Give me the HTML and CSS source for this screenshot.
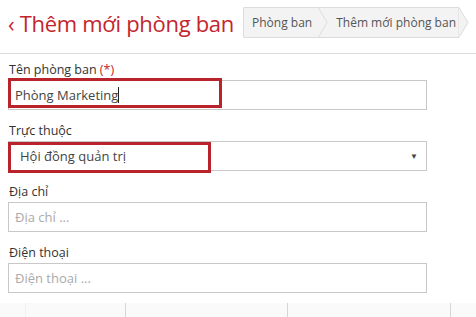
FILE: index.html
```html
<!DOCTYPE html>
<html>
<head lang="vi">
    <meta charset="UTF-8">
    <title>Thêm mới phòng ban</title>
    <link rel="stylesheet" href="styles.css">
</head>
<body>
<div class="header">
    <div class="title"><span class="back">&lsaquo;</span> Thêm mới phòng ban</div>
    <div class="crumbs">
        <span class="crumb">Phòng ban</span>
        <svg class="sep" width="16" height="31" viewBox="0 0 16 31"><rect x="0" y="0" width="16" height="31" fill="#f3f3f3"/><line x1="0" y1="0.5" x2="16" y2="0.5" stroke="#dcdcdc"/><line x1="0" y1="30.5" x2="16" y2="30.5" stroke="#dcdcdc"/><polyline points="3,0 12,15.5 3,31" fill="none" stroke="#dcdcdc"/></svg>
        <span class="crumb last">Thêm mới phòng ban</span>
        <svg class="sep" width="12" height="31" viewBox="0 0 12 31"><polygon points="0,0.5 1,0.5 10,15.5 1,30.5 0,30.5" fill="#f3f3f3" stroke="#dcdcdc"/></svg>
    </div>
</div>

<div class="form">
    <div class="field">
        <label>Tên phòng ban <span class="req">(*)</span></label>
        <div class="box">
            <div class="inp txt">Phòng Marketing<span class="caret"></span></div>
            <div class="mark mark1"></div>
        </div>
    </div>
    <div class="field">
        <label>Trực thuộc</label>
        <div class="box">
            <div class="inp sel">Hội đồng quản trị<span class="arrow">&#9660;</span></div>
            <div class="mark mark2"></div>
        </div>
    </div>
    <div class="field">
        <label>Địa chỉ</label>
        <div class="box"><input class="inp" type="text" placeholder="Địa chỉ ..."></div>
    </div>
    <div class="field">
        <label>Điện thoại</label>
        <div class="box"><input class="inp" type="text" placeholder="Điện thoại ..."></div>
    </div>
</div>

<div class="bar">
    <div class="cell c1"></div>
    <div class="cell c2"></div>
    <div class="cell c3"></div>
    <div class="cell c4"></div>
</div>
</body>
</html>
```

FILE: styles.css
```css
*{
    padding:0;
    margin:0;
    box-sizing: border-box;
}
body{
    font-family: "Open Sans", "Noto Sans", sans-serif;
    background: #fff;
    width: 476px;
    height: 317px;
    overflow: hidden;
}
.header{
    display: flex;
    justify-content: space-between;
    align-items: flex-start;
    height: 54px;
    padding: 7px 6px 0 8px;
    border-bottom: 1px solid #dcdcdc;
}
.title{
    color: #c4252c;
    font-size: 22px;
    line-height: 32px;
    letter-spacing: -0.3px;
}
.back{
    font-size: 22px;
}
.crumbs{
    display: flex;
    height: 31px;
}
.crumb{
    background: #f3f3f3;
    border-top: 1px solid #dcdcdc;
    border-bottom: 1px solid #dcdcdc;
    color: #555;
    font-size: 12px;
    line-height: 29px;
    padding: 0;
}
.crumb:first-child{
    border-left: 1px solid #dcdcdc;
    border-radius: 2px 0 0 2px;
    padding-left: 8px;
    padding-right: 3px;
}
.crumb.last{
    padding-left: 5px;
    padding-right: 2px;
}
.sep{
    display: block;
}
.form{
    padding: 5px 49px 0 8px;
}
.field{
    margin-bottom: 10px;
}
.field label{
    display: block;
    font-size: 12.5px;
    line-height: 21px;
    color: #333;
    padding-left: 1px;
}
.req{
    color: #c4252c;
}
.box{
    position: relative;
}
.inp{
    display: block;
    width: 100%;
    height: 30px;
    border: 1px solid #c8c8c8;
    font-family: "Open Sans", "Noto Sans", sans-serif;
    font-size: 13px;
    color: #444;
    padding: 0 6px;
    outline: none;
    background: #fff;
}
.inp::placeholder{
    color: #aaa;
}
.txt{
    line-height: 28px;
    padding-left: 6px;
}
.caret{
    display: inline-block;
    width: 1px;
    height: 16px;
    background: #222;
    vertical-align: -3px;
}
.sel{
    line-height: 28px;
    padding-left: 11px;
    position: relative;
}
.arrow{
    position: absolute;
    right: 8px;
    top: 0;
    font-size: 8px;
    color: #444;
}
.mark{
    position: absolute;
    border: 3px solid #b8232c;
    left: 0;
}
.mark1{
    top: -2px;
    width: 214px;
    height: 30px;
}
.mark2{
    top: 1px;
    width: 203px;
    height: 31px;
}
.bar{
    display: flex;
    height: 20px;
    margin-top: 1px;
    background: #fafafa;
}
.cell{
    border-right: 1px solid #d6d6d6;
}
.c1{ width: 26px; border-right-color: #f0f0f0; }
.c2{ width: 100px; }
.c3{ width: 162px; }
.c4{ width: 163px; }
```
